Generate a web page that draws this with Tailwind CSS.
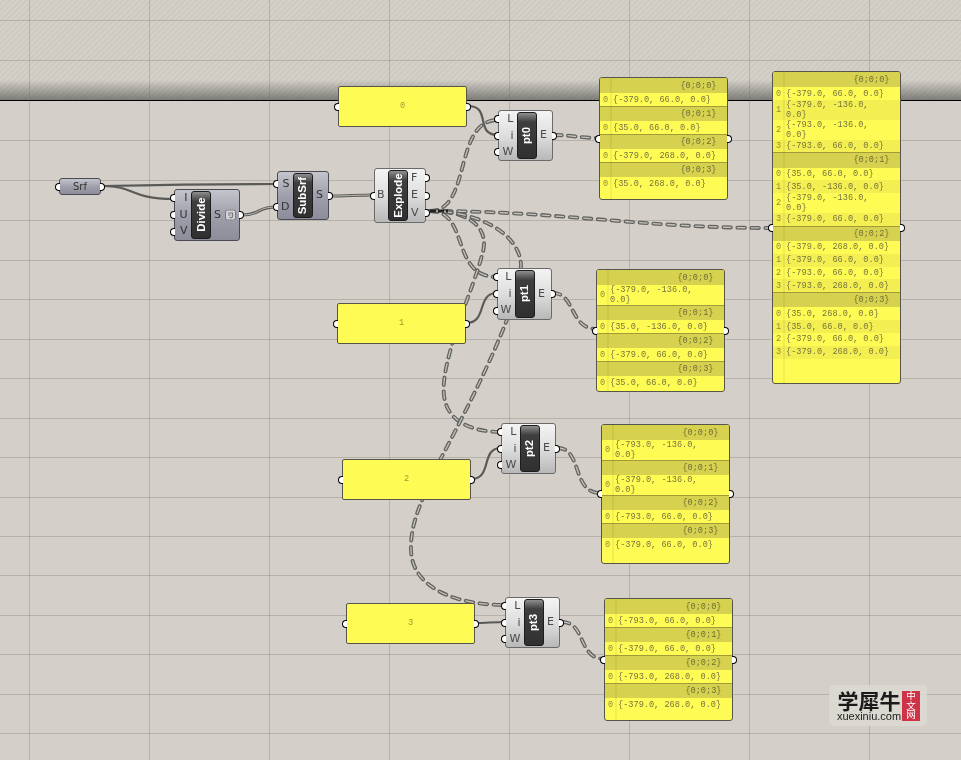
<!DOCTYPE html>
<html lang="en">
<head>
    <meta charset="UTF-8">
    <title>Grasshopper canvas</title>
    <script src="https://cdn.jsdelivr.net/npm/@tailwindcss/browser@4"></script>
</head>
<body class="w-[961px] h-[760px] overflow-hidden bg-[#d4d0c9]">
<div id="canvas" class="relative w-[961px] h-[760px] overflow-hidden">

    <!-- hatched band above the x axis -->
    <div class="relative h-[101px] border-b border-black bg-[repeating-linear-gradient(135deg,#d3d0c9_0px,#d3d0c9_2px,#cdcac2_2px,#cdcac2_4px)]">
        <div class="absolute left-0 right-0 bottom-0 h-[20px] bg-linear-to-b from-black/0 to-black/40"></div>
    </div>

    <!-- grid -->
    <svg class="absolute inset-0" width="961" height="760" fill="none">
        <path stroke="#6e6c64" stroke-opacity="0.3" d="M0 20.5H961M0 60.5H961M0 140.5H961M0 180.5H961M0 220.5H961M0 260.5H961M0 299.5H961M0 339.5H961M0 378.5H961M0 418.5H961M0 457.5H961M0 497.5H961M0 536.5H961M0 575.5H961M0 615.5H961M0 654.5H961M0 694.5H961M0 733.5H961M29.5 0V760M149.5 0V760M269.5 0V760M389.5 0V760M509.5 0V760M629.5 0V760M749.5 0V760M869.5 0V760"/>
    </svg>

    <!-- wires -->
    <svg id="wires" class="absolute inset-0" width="961" height="760" fill="none"></svg>

    <!-- nodes get added here -->
    <div id="nodes" class="absolute inset-0 will-change-transform"></div>

    <!-- watermark -->
    <div class="absolute left-[829px] top-[685px] w-[98px] h-[41px] rounded-[5px] bg-[#dbd8d2]/90 flex items-center pl-[7px] will-change-transform">
        <div class="w-[66px] flex flex-col items-center">
            <div class="text-[21px] leading-[21px] font-bold text-[#1a1a1a] font-['Noto_Sans_CJK_SC',sans-serif] whitespace-nowrap">学犀牛</div>
            <div class="text-[11px] leading-[11px] text-[#222] font-['Liberation_Sans',sans-serif] whitespace-nowrap">xuexiniu.com</div>
        </div>
        <div class="w-[18px] h-[30px] bg-[#cf3348] text-white text-[9.5px] leading-[18px] flex items-center justify-center font-['Noto_Sans_CJK_SC',sans-serif] [writing-mode:vertical-rl]">中文网</div>
    </div>
</div>

<script>
    // --- wires ---
    const solid = [
        "M103 186 C 135 186 130 199 173 199",
        "M103 186 C 150 185 220 184 277 184",
        "M468 106 C 492 106 474 135 498 135",
        "M466 323 C 488 323 476 293 497 293",
        "M471 479 C 493 479 480 448 501 448",
        "M475 623 C 485 623 495 622 505 622"
    ];
    const list = [
        "M241 215 C 262 215 255 207 277 207",
        "M330 196 C 345 196 358 195 373 195"
    ];
    const dashed = [
        "M430 211 C 472 211 453 120 498 120",
        "M430 211 C 560 211 640 228 772 228",
        "M430 211 C 470 211 450 277 497 277",
        "M430 211 C 475 211 490 232 482 255 C 475 285 440 360 444 395 C 446 420 470 432 501 432",
        "M430 211 C 480 211 520 235 521 265 C 521 300 480 385 440 460 C 425 495 410 520 411 550 C 412 590 460 605 505 605",
        "M554 135 C 570 135 580 138 600 138",
        "M553 293 C 575 293 570 329 596 329",
        "M558 448 C 582 448 572 493 600 493",
        "M562 622 C 586 622 578 659 604 659"
    ];
    let wireSvg = "";
    solid.forEach(d => {
        wireSvg += `<path d="${d}" stroke="#5a5a58" stroke-width="2.2"/>`;
    });
    list.forEach(d => {
        wireSvg += `<path d="${d}" stroke="#5e5e5c" stroke-width="3.2"/><path d="${d}" stroke="#b9b7b0" stroke-width="1"/>`;
    });
    dashed.forEach(d => {
        wireSvg += `<path d="${d}" stroke="#626260" stroke-width="3.9" stroke-linecap="round" stroke-dasharray="7.5 6.5"/>`;
        wireSvg += `<path d="${d}" stroke="#c4c2bb" stroke-width="1.3" stroke-linecap="round" stroke-dasharray="7.5 6.5"/>`;
    });
    // little black stub where all the dashed wires leave Explode
    wireSvg += `<path d="M430 211 H448" stroke="#222" stroke-width="3" stroke-dasharray="6 2"/>`;
    document.getElementById("wires").innerHTML = wireSvg;

    // --- nodes ---
    const portL = `<span class="absolute -left-[5px] top-1/2 -translate-y-1/2 w-[5px] h-[8px] rounded-l-full bg-white border-[1.5px] border-r-0 border-black"></span>`;
    const portR = `<span class="absolute -right-[5px] top-1/2 -translate-y-1/2 w-[5px] h-[8px] rounded-r-full bg-white border-[1.5px] border-l-0 border-black"></span>`;

    const lightBody = "bg-linear-to-b from-[#f4f4f4] via-[#dedede] to-[#b8b8b8] border-[#6a6a6a] text-[#4a4a4a]";
    const greyBody = "bg-linear-to-b from-[#c4c4cc] via-[#a0a0ac] to-[#8c8c9a] border-[#4a4a52] text-[#333]";

    function component(c) {
        const inputs = c.inputs.map(n => `<div class="relative flex-1 flex items-center justify-end pr-[3.5px]">${portL}${n}</div>`).join("");
        const outputs = c.outputs.map(n => `<div class="relative flex-1 flex items-center pl-[3px]">${portR}${n}</div>`).join("");
        const icon = c.icon ? `<svg class="absolute right-[3px] top-1/2 -translate-y-1/2" width="11" height="11" viewBox="0 0 11 11" fill="none"><rect x="0.5" y="0.5" width="10" height="10" rx="2" fill="#d4d4d4" stroke="#77777f"/><path d="M3 3.5H7.5V7C7.5 8.5 5 8.5 4.5 7.5M3 5.5H5.5" stroke="#77777f" stroke-width="1.2"/></svg>` : "";
        return `<div class="absolute flex rounded-[3px] border text-[11px] font-['DejaVu_Sans',sans-serif] ${c.light ? lightBody : greyBody}" style="left:${c.x}px;top:${c.y}px;width:${c.w}px;height:${c.h}px">
            <div class="flex flex-col" style="width:${c.left}px">${inputs}</div>
            <div class="my-[1px] w-[20px] shrink-0 rounded-[3px] border border-[#1c1c1c] bg-linear-to-b from-[#8f8f8f] via-[#3f3f3f] via-20% to-[#303030] flex items-center justify-center">
                <span class="-rotate-90 whitespace-nowrap text-white font-bold text-[11.4px] font-['Liberation_Sans',sans-serif]">${c.name}</span>
            </div>
            <div class="relative flex-1 flex flex-col">${outputs}${icon}</div>
        </div>`;
    }

    const components = [
        { name: "Divide", x: 174, y: 189, w: 66, h: 52, left: 16, inputs: ["I", "U", "V"], outputs: ["S"], icon: true },
        { name: "SubSrf", x: 277, y: 171, w: 52, h: 49, left: 15, inputs: ["S", "D"], outputs: ["S"] },
        { name: "Explode", x: 374, y: 168, w: 52, h: 55, left: 13, inputs: ["B"], outputs: ["F", "E", "V"], light: true },
        { name: "pt0", x: 498, y: 110, w: 55, h: 51, left: 18, inputs: ["L", "i", "W"], outputs: ["E"], light: true },
        { name: "pt1", x: 497, y: 268, w: 55, h: 52, left: 17, inputs: ["L", "i", "W"], outputs: ["E"], light: true },
        { name: "pt2", x: 501, y: 423, w: 55, h: 51, left: 18, inputs: ["L", "i", "W"], outputs: ["E"], light: true },
        { name: "pt3", x: 505, y: 597, w: 55, h: 51, left: 18, inputs: ["L", "i", "W"], outputs: ["E"], light: true }
    ];

    // yellow text params
    const params = [
        { label: "0", x: 338, y: 86 },
        { label: "1", x: 337, y: 303 },
        { label: "2", x: 342, y: 459 },
        { label: "3", x: 346, y: 603 }
    ];

    function param(p) {
        return `<div class="absolute w-[129px] h-[41px] rounded-[2px] border border-[#55554a] bg-[#fffb55] flex items-center justify-center text-[8.6px] text-[#9c9a30] font-['Liberation_Mono',monospace]" style="left:${p.x}px;top:${p.y}px">${portL}${p.label}${portR}</div>`;
    }

    // panels: each branch is a list of rows, \n where the text wraps
    function panel(p) {
        const branches = p.branches.map((rows, b) => {
            const head = `<div class="h-[15.2px] flex items-center justify-end pr-[10px] bg-[#d6d250] text-[#6f6d38] ${b > 0 ? "border-t border-[#a09c3c]" : ""}">{0;0;${b}}</div>`;
            const body = rows.map((t, i) => {
                const tall = t.includes("\n");
                return `<div class="flex items-center ${tall ? "h-[19.8px]" : "h-[12.8px]"} ${i % 2 ? "bg-[#f3ef52]" : "bg-[#fffb55]"}">
                    <span class="w-[13px] pl-[3px] shrink-0 text-[#8e8c3a]">${i}</span>
                    <span class="whitespace-pre text-[#767440]">${t}</span>
                </div>`;
            }).join("");
            return head + body;
        }).join("");
        return `<div class="absolute rounded-[3px] border border-[#55554a] bg-[#fffb55] text-[8.6px] leading-[10px] font-['Liberation_Mono',monospace]" style="left:${p.x}px;top:${p.y}px;width:128.5px;height:${p.h}px">
            <div class="overflow-hidden rounded-[2px] h-full relative">
                ${branches}
                <div class="absolute left-[10px] top-0 bottom-0 w-[2px] bg-black/5"></div>
            </div>
            ${portL}${portR}
        </div>`;
    }

    const panels = [
        { x: 599, y: 77, h: 123, branches: [
            ["{-379.0, 66.0, 0.0}"], ["{35.0, 66.0, 0.0}"], ["{-379.0, 268.0, 0.0}"], ["{35.0, 268.0, 0.0}"]
        ] },
        { x: 772, y: 71, h: 313, branches: [
            ["{-379.0, 66.0, 0.0}", "{-379.0, -136.0,\n0.0}", "{-793.0, -136.0,\n0.0}", "{-793.0, 66.0, 0.0}"],
            ["{35.0, 66.0, 0.0}", "{35.0, -136.0, 0.0}", "{-379.0, -136.0,\n0.0}", "{-379.0, 66.0, 0.0}"],
            ["{-379.0, 268.0, 0.0}", "{-379.0, 66.0, 0.0}", "{-793.0, 66.0, 0.0}", "{-793.0, 268.0, 0.0}"],
            ["{35.0, 268.0, 0.0}", "{35.0, 66.0, 0.0}", "{-379.0, 66.0, 0.0}", "{-379.0, 268.0, 0.0}"]
        ] },
        { x: 596, y: 269, h: 123, branches: [
            ["{-379.0, -136.0,\n0.0}"], ["{35.0, -136.0, 0.0}"], ["{-379.0, 66.0, 0.0}"], ["{35.0, 66.0, 0.0}"]
        ] },
        { x: 601, y: 424, h: 140, branches: [
            ["{-793.0, -136.0,\n0.0}"], ["{-379.0, -136.0,\n0.0}"], ["{-793.0, 66.0, 0.0}"], ["{-379.0, 66.0, 0.0}"]
        ] },
        { x: 604, y: 598, h: 123, branches: [
            ["{-793.0, 66.0, 0.0}"], ["{-379.0, 66.0, 0.0}"], ["{-793.0, 268.0, 0.0}"], ["{-379.0, 268.0, 0.0}"]
        ] }
    ];

    const srf = `<div class="absolute left-[59px] top-[178px] w-[42px] h-[17px] rounded-[3px] border border-[#4a4a52] bg-linear-to-b from-[#c4c4cc] via-[#a0a0ac] to-[#8c8c9a] flex items-center justify-center text-[10px] text-[#333] font-['DejaVu_Sans',sans-serif]">${portL}Srf${portR}</div>`;

    document.getElementById("nodes").innerHTML =
        srf +
        components.map(component).join("") +
        params.map(param).join("") +
        panels.map(panel).join("");
</script>
</body>
</html>
